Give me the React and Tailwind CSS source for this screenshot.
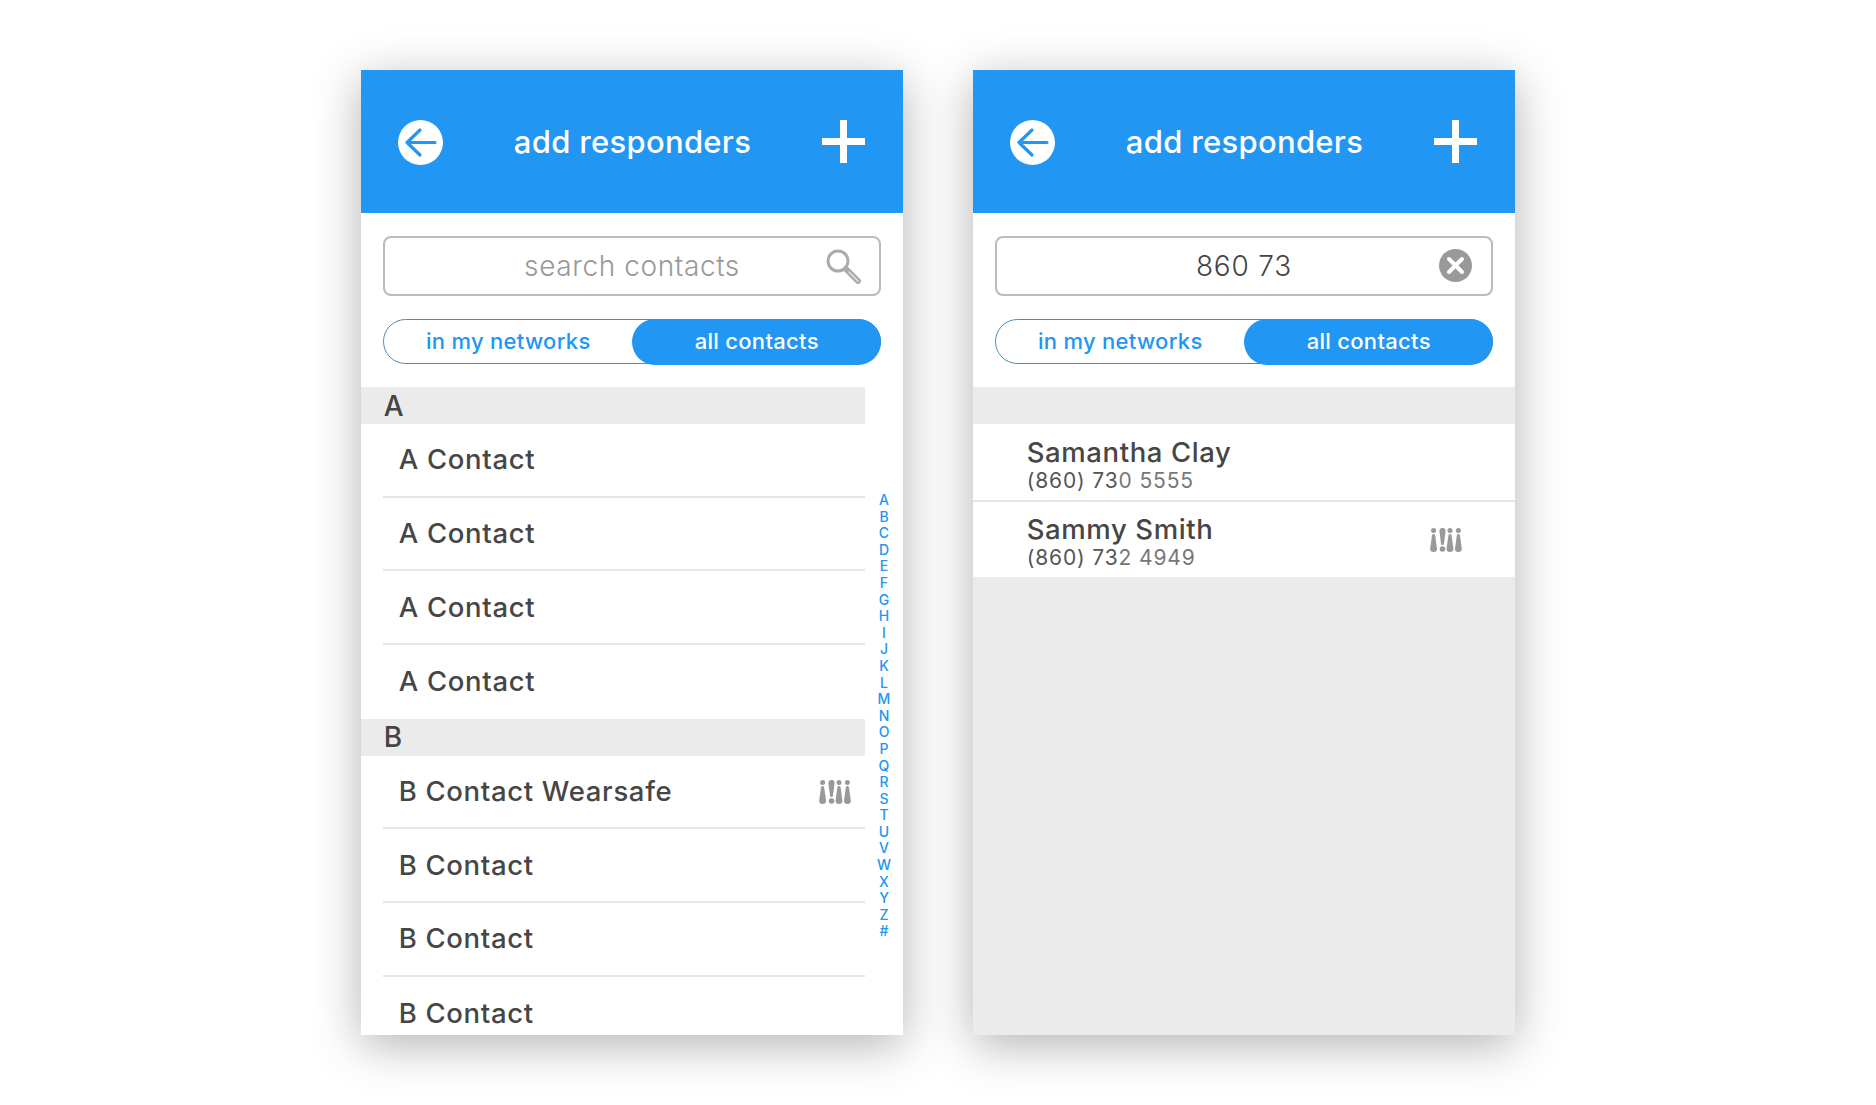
import React from "react";

const font = { fontFamily: '"Inter", "Liberation Sans", sans-serif' };
const letters = "ABCDEFGHIJKLMNOPQRSTUVWXYZ#".split("");

const BackIcon = () => (
    <svg width="45" height="45" viewBox="0 0 45 45" className="mt-[2px]">
        <circle cx="22.5" cy="22.5" r="22.5" fill="#fff" />
        <path d="M37 22.5H9M22 10L9 22.5L22 35" fill="none" stroke="#2196f3" strokeWidth="3.2" strokeLinecap="round" strokeLinejoin="round" />
    </svg>
);

const PlusIcon = () => (
    <svg width="43" height="43" viewBox="0 0 43 43">
        <path d="M18 0h7v18h18v7H25v18h-7V25H0v-7h18z" fill="#fff" />
    </svg>
);

const SearchIcon = () => (
    <svg width="36" height="36" viewBox="0 0 36 36">
        <circle cx="12" cy="13" r="10" fill="none" stroke="#aaaaaa" strokeWidth="3" />
        <path d="M20 21L32 33" stroke="#aaaaaa" strokeWidth="6" strokeLinecap="round" />
        <path d="M23 24L32 33" stroke="#e2e2e2" strokeWidth="1.5" strokeLinecap="round" />
    </svg>
);

const ClearIcon = () => (
    <svg width="33" height="33" viewBox="0 0 33 33">
        <circle cx="16.5" cy="16.5" r="16.5" fill="#999999" />
        <path d="M10 10L23 23M23 10L10 23" stroke="#fff" strokeWidth="4" strokeLinecap="round" />
    </svg>
);

// wearsafe mark: dot and bar columns, the second one flipped
const WearsafeIcon = () => (
    <svg width="32" height="24" viewBox="0 0 32 24" fill="#999999">
        <circle cx="3.6" cy="2.5" r="2.5" />
        <path d="M2 7.5a1.6 1.6 0 0 1 3.2 0L7 20.5a3.4 3.4 0 0 1-3.4 3.5a3.4 3.4 0 0 1-3.4-3.5z" />
        <path d="M9.4 3a3 3 0 0 1 6.2 0L14 15.5a1.5 1.5 0 0 1-3 0z" />
        <circle cx="12.5" cy="21" r="2.8" />
        <circle cx="20" cy="2.5" r="2.5" />
        <path d="M18.4 7.5a1.6 1.6 0 0 1 3.2 0L23.4 20.5a3.4 3.4 0 0 1-3.4 3.5a3.4 3.4 0 0 1-3.4-3.5z" />
        <circle cx="28.4" cy="2.5" r="2.5" />
        <path d="M26.8 7.5a1.6 1.6 0 0 1 3.2 0L31.8 20.5a3.4 3.4 0 0 1-3.4 3.5a3.4 3.4 0 0 1-3.4-3.5z" />
    </svg>
);

const Header = () => (
    <div className="flex h-[143px] shrink-0 items-center justify-between bg-[#2196f3] pl-[37px] pr-[38px]">
        <BackIcon />
        <span className="pt-[2px] text-[31px] font-medium tracking-[0.3px] text-white">add responders</span>
        <PlusIcon />
    </div>
);

const Toggle = () => (
    <div className="mx-[22.5px] mt-[23px] flex h-[45px] rounded-full border-[1.5px] border-[#4a8dbd] text-[22px] font-medium tracking-[0.3px]">
        <div className="flex flex-1 items-center justify-center text-[#2196f3]">in my networks</div>
        <div className="-my-[1.5px] -mr-[1.5px] flex w-[249px] items-center justify-center rounded-full bg-[#2196f3] text-white">all contacts</div>
    </div>
);

const Section = ({ label }) => (
    <div className="flex h-[37px] items-center bg-[#ebebeb] pl-[23px] text-[28px] font-medium leading-none text-[#444444]">{label}</div>
);

const ContactRow = ({ name, wearsafe, last }) => (
    <div className={`ml-[22px] flex h-[73.7px] items-center justify-between pl-[16px] pr-[14px] text-[27.5px] font-medium tracking-[0.67px] text-[#464646] ${last ? "" : "border-b-2 border-[#e6e6e6]"}`}>
        <span>{name}</span>
        {wearsafe && <WearsafeIcon />}
    </div>
);

const ResultRow = ({ name, match, rest, wearsafe, className, textClass }) => (
    <div className={`flex items-center justify-between bg-white pl-[54px] pr-[53px] ${className}`}>
        <div className={`flex flex-col ${textClass}`}>
            <span className="text-[27.5px] font-medium leading-[30px] tracking-[0.6px] text-[#464646]">{name}</span>
            <span className="text-[21px] leading-[27px] tracking-[0.85px] text-[#777777]">
                <span className="text-[#555555]">{match}</span>
                {rest}
            </span>
        </div>
        {wearsafe && <WearsafeIcon />}
    </div>
);

const Panel = ({ children }) => (
    <div className="flex h-[965px] w-[542.5px] flex-col overflow-hidden bg-white shadow-[0_10px_45px_rgba(0,0,0,0.3)]">
        {children}
    </div>
);

const App = () => {
    return (
        <div className="flex h-[1105px] justify-center gap-[69.5px] bg-white pt-[70px]" style={font}>
            <Panel>
                <Header />
                <div className="mx-[22.5px] mt-[23px] flex h-[60px] items-center justify-center rounded-lg border-2 border-[#bbbbbb] relative text-[28px] font-light tracking-[0.6px] text-[#999999]">
                    search contacts
                    <span className="absolute right-[17px] top-[10px]"><SearchIcon /></span>
                </div>
                <Toggle />
                <div className="mt-[23px] flex min-h-0 flex-1">
                    <div className="w-[504px] shrink-0">
                        <Section label="A" />
                        <ContactRow name="A Contact" />
                        <ContactRow name="A Contact" />
                        <ContactRow name="A Contact" />
                        <ContactRow name="A Contact" last />
                        <Section label="B" />
                        <ContactRow name="B Contact Wearsafe" wearsafe />
                        <ContactRow name="B Contact" />
                        <ContactRow name="B Contact" />
                        <ContactRow name="B Contact" last />
                    </div>
                    <div className="flex flex-1 flex-col items-center pt-[105px] text-[14px] font-medium leading-[16.6px] text-[#2196f3]">
                        {letters.map((l) => (
                            <span key={l}>{l}</span>
                        ))}
                    </div>
                </div>
            </Panel>
            <Panel>
                <Header />
                <div className="mx-[22.5px] mt-[23px] flex h-[60px] items-center justify-center rounded-lg border-2 border-[#bbbbbb] relative text-[28px] font-light tracking-[0.8px] text-[#444444]">
                    860 73
                    <span className="absolute right-[19px] top-[11px] flex"><ClearIcon /></span>
                </div>
                <Toggle />
                <div className="mt-[23px] flex flex-1 flex-col bg-[#ebebeb] pt-[37px]">
                    <ResultRow className="h-[78px] border-b-2 border-[#e6e6e6]" textClass="pt-[7px]" name="Samantha Clay" match="(860) 73" rest="0 5555" />
                    <ResultRow className="h-[75px]" textClass="pt-[5px]" name="Sammy Smith" match="(860) 73" rest="2 4949" wearsafe />
                </div>
            </Panel>
        </div>
    );
};

export default App;
